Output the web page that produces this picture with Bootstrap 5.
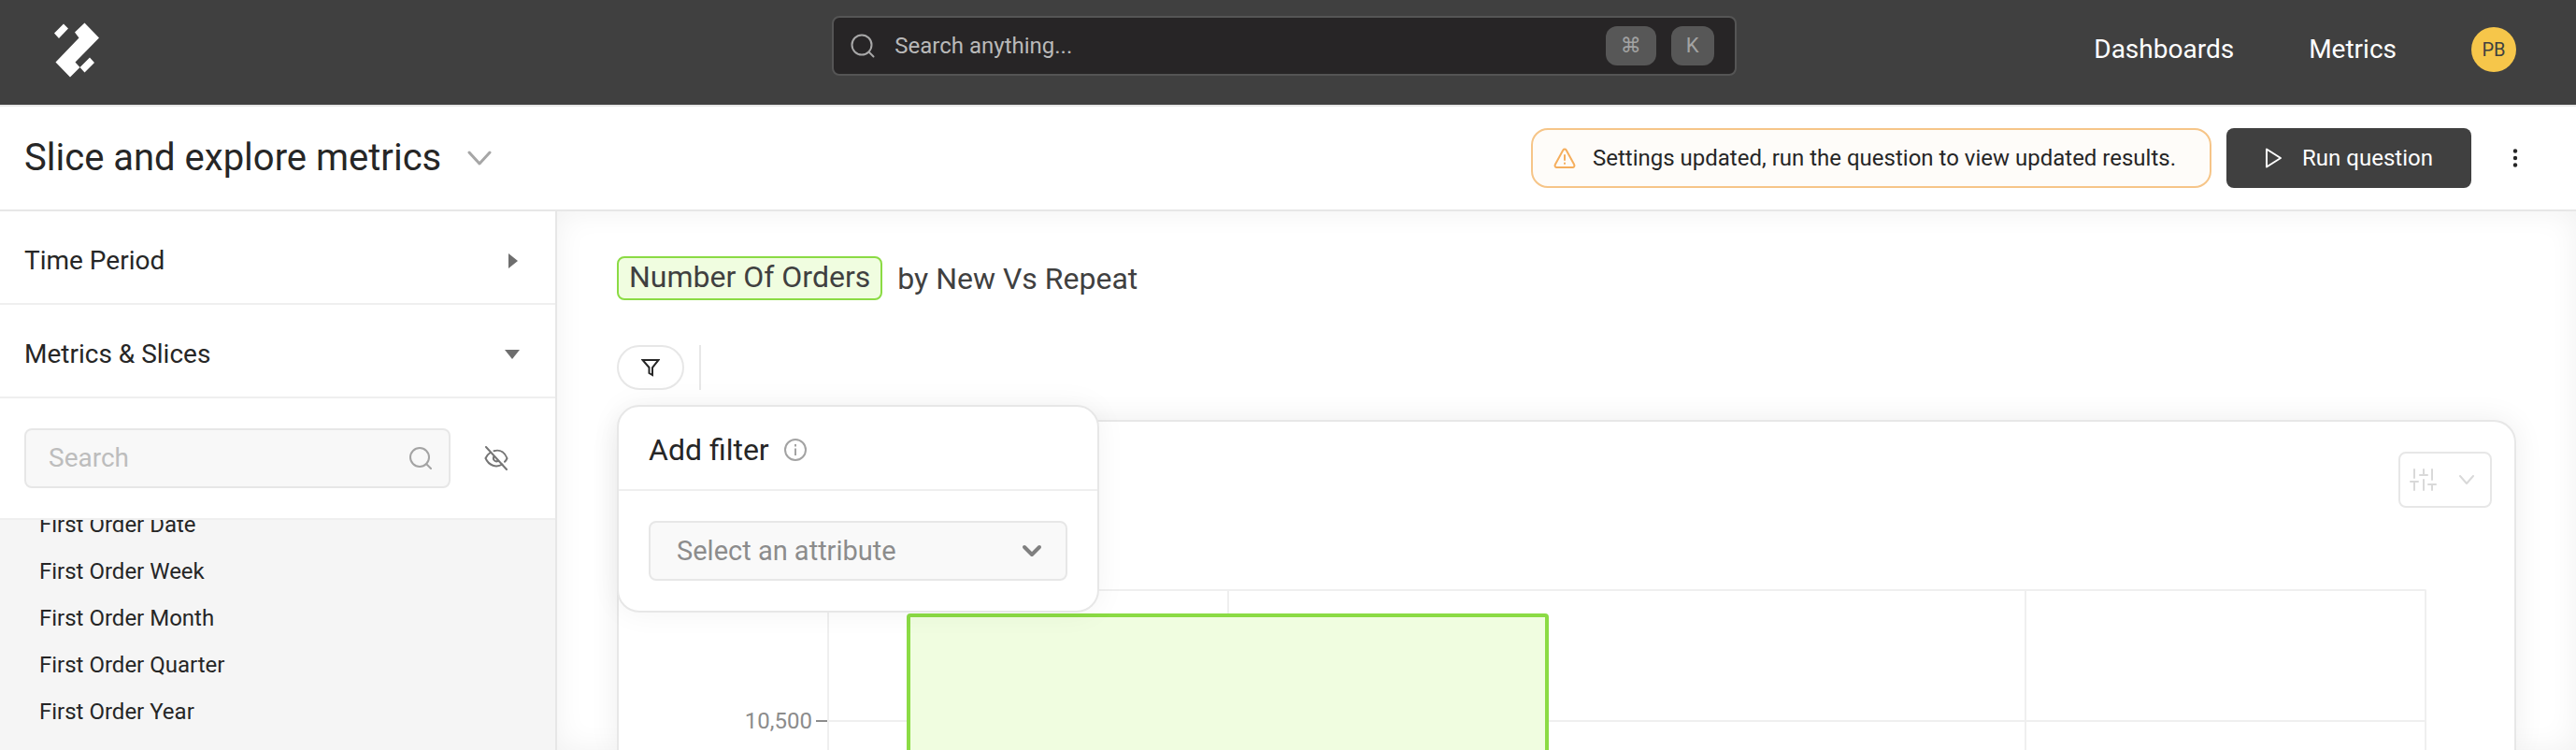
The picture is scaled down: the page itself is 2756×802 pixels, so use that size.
<!DOCTYPE html>
<html lang="en">
<head>
<meta charset="utf-8">
<meta name="viewport" content="width=device-width, initial-scale=1">
<title>Slice and explore metrics</title>
<link rel="stylesheet" href="https://cdn.jsdelivr.net/npm/bootstrap@5.3.0/dist/css/bootstrap.min.css">
<style>
:root{--line:#e7e7e7;--line-soft:#efefef;--ink:#262626;--charcoal:#404040;--green:#8bdb44;--green-bg:#f0fde0}
body{font-family:Roboto,"Liberation Sans",sans-serif;font-size:24px;line-height:32px;color:var(--ink);background:#fff}
svg{display:block;flex:none}
.fs-md{font-size:28px}
.fs-lg{font-size:32px;line-height:40px}
.topbar{background:var(--charcoal);border-bottom:2px solid var(--line);height:114px;padding:0 64px 0 56px;display:grid;grid-template-columns:1fr 36.7% 1fr;align-items:center}
.topbar a{color:#fff;text-decoration:none}
.brand{padding-bottom:4px}
.omni{background:#272526;border:2px solid #555;border-radius:8px;height:64px;padding:0 22px 0 18px;gap:21px;margin-bottom:14px}
.omni input{background:none;border:0;outline:0;color:#b9b9b9;min-width:0;padding:0}
.omni input::placeholder{color:#b9b9b9;opacity:1}
.omni kbd{font-family:Roboto,"DejaVu Sans",sans-serif;font-size:22px;background:#575757;color:#a3a3a3;border-radius:12px;padding:0;height:42px;line-height:42px;width:46px;text-align:center}
.omni kbd.wide{width:54px}
.toplinks{gap:80px;padding-bottom:6px}
.avatar{width:48px;height:48px;border-radius:50%;background:#f6c64a;color:#404040;font-size:20px;border:0;padding:0}
.titlebar{height:112px;border-bottom:2px solid var(--line);padding:0 62px 0 26px}
.titlebar h1{font-size:40px;line-height:48px;font-weight:400}
.switch{margin-left:28px}
.more{margin-left:44px}
.notice{border:2px solid #f6c588;border-radius:18px;background:#fefcf9;height:64px;padding:0 36px 0 22px;gap:18px}
.run{background:var(--charcoal);color:#fff;border:0;border-radius:8px;height:64px;width:262px;font-size:24px;gap:20px}
.run:hover{background:#2d2d2d;color:#fff}
.plain{background:none;border:0;padding:0;color:inherit}
.work{min-height:0}
.side{width:596px;border-right:2px solid var(--line)}
.side-head{height:100px;border:0;border-bottom:2px solid var(--line-soft);background:none;color:var(--ink);padding:8px 38px 0 26px;font-size:28px;text-align:left}
.side-find{height:130px;border-bottom:2px solid var(--line-soft);padding:0 50px 0 26px;gap:36px}
.find-box{background:#f8f8f8;border:2px solid var(--line);border-radius:8px;height:64px;padding:0 18px 0 24px}
.find-box input{background:none;border:0;outline:0;min-width:0;padding:0;font-size:28px}
.find-box input::placeholder{color:#bdbdbd;opacity:1}
.attrs{background:#f5f5f5;overflow:hidden;min-height:0}
.attrs a{display:block;height:50px;line-height:50px;padding-left:42px;color:var(--ink);text-decoration:none}
.attrs-end{height:40vh}
.stage{padding:48px 64px 0;box-shadow:inset 0 0 32px rgba(0,0,0,.06);min-width:0}
.stage h2{color:var(--charcoal);font-weight:400;font-size:32px;line-height:40px;gap:16px}
.metric{border:2px solid var(--green);background:var(--green-bg);border-radius:8px;padding:0 11px 3px}
.filters{margin-top:48px;height:48px;gap:16px}
.pill{width:72px;height:48px;border:2px solid var(--line);border-radius:24px;background:#fff;padding:0}
.rule{width:2px;background:var(--line)}
.pop{position:absolute;left:0;top:64px;width:516px;z-index:2;background:#fff;border:2px solid var(--line);border-radius:24px;box-shadow:0 0 32px rgba(0,0,0,.05)}
.pop-head{height:90px;padding:4px 32px 0;gap:16px;border-bottom:2px solid var(--line-soft)}
.pop-body{padding:32px}
.pick{appearance:none;width:100%;height:64px;border:2px solid var(--line);border-radius:8px;font-size:29px;line-height:36px;color:#8c8c8c;padding:0 64px 0 28px;background:#f9f9f9 url("data:image/svg+xml,%3Csvg xmlns='http://www.w3.org/2000/svg' width='24' height='24' fill='none' stroke='%23808080' stroke-width='4' stroke-linecap='round' stroke-linejoin='round'%3E%3Cpath d='M4 8l8 8 8-8'/%3E%3C/svg%3E") no-repeat right 24px center}
.panel{margin-top:32px;border:2px solid var(--line);border-bottom:0;border-radius:24px 24px 0 0;box-shadow:0 0 32px rgba(0,0,0,.07);background:#fff;min-height:0}
.panel-tools{padding:32px 24px 0;height:179px}
.tune{width:100px;height:60px;border:2px solid var(--line);border-radius:8px;background:#fff;gap:22px;padding:0 0 0 10px;color:#d9d9d9}
.axis{width:223px;padding-top:125px;color:#8c8c8c}
.axis span{display:flex;align-items:center;justify-content:flex-end;gap:4px;height:32px;margin-bottom:108px}
.axis span::after{content:"";width:12px;height:2px;background:#8c8c8c}
.plot{margin-right:94px;border:2px solid var(--line-soft);border-bottom:0;border-radius:2px 2px 0 0;background:
 linear-gradient(var(--line-soft),var(--line-soft)) 25% 0/2px 100% no-repeat,
 linear-gradient(var(--line-soft),var(--line-soft)) 75% 0/2px 100% no-repeat,
 repeating-linear-gradient(transparent 0 138px,var(--line-soft) 138px 140px)}
.slot{width:50%;overflow:hidden}
.column{width:80.5%;margin:24px auto 0;border:4px solid var(--green);border-radius:4px;background:var(--green-bg);height:1200px}
</style>
</head>
<body class="vh-100 overflow-hidden d-flex flex-column">
<header class="topbar flex-shrink-0">
  <a class="brand" href="#" aria-label="Home"><svg width="52" height="60" viewBox="0 0 52 60" fill="#fff"><path d="M2 11.500L12 1.500l5 5L7 17zM24 10.500L34.500.500 50 16.500 24.500 42.500 29.500 48 19 58.500 3.500 42.500 28.500 16.500zM29.500 48L40 37.500l5 5.500L34.500 53.500z"/></svg></a>
  <label class="omni d-flex align-items-center">
    <svg width="26" height="26" viewBox="0 0 26 26" fill="none" stroke="#a8a8a8" stroke-width="2" stroke-linecap="round"><circle cx="12" cy="12" r="10.500"/><path d="M19.500 19.500l5 5"/></svg>
    <input class="flex-fill" type="text" placeholder="Search anything..." aria-label="Search anything">
    <span class="d-flex align-items-center gap-3"><kbd class="wide">⌘</kbd><kbd>K</kbd></span>
  </label>
  <nav class="toplinks d-flex justify-content-end align-items-center fs-md"><a href="#">Dashboards</a><a href="#">Metrics</a><button class="avatar" type="button">PB</button></nav>
</header>
<div class="titlebar d-flex align-items-center flex-shrink-0">
  <h1 class="mb-0">Slice and explore metrics</h1>
  <button class="plain switch" type="button" aria-label="Switch question"><svg width="26" height="18" fill="none" stroke="#a6a6a6" stroke-width="3" stroke-linecap="round" stroke-linejoin="round"><path d="M2 3l11 12L24 3"/></svg></button>
  <div class="d-flex align-items-center gap-3 ms-auto">
    <div class="notice d-flex align-items-center" role="status"><svg width="24" height="24" viewBox="0 0 24 24" fill="none" stroke="#f5ae5d" stroke-width="2" stroke-linejoin="round" stroke-linecap="round"><path d="M10.300 3.500L1.800 19a2 2 0 0 0 1.700 3h17a2 2 0 0 0 1.700-3L13.700 3.500a2 2 0 0 0-3.400 0zM12 9v5M12 17.500v.500"/></svg>Settings updated, run the question to view updated results.</div>
    <button class="run d-flex align-items-center justify-content-center" type="button"><svg width="20" height="22" fill="none" stroke="#fff" stroke-width="2" stroke-linejoin="round"><path d="M2 1.500v19L17 11z"/></svg>Run question</button>
  </div>
  <button class="plain more" type="button" aria-label="More"><svg width="6" height="20" viewBox="-3 0 6 20" fill="#262626"><circle cx="0" cy="2.500" r="2.200"/><circle cx="0" cy="10" r="2.200"/><circle cx="0" cy="17.500" r="2.200"/></svg></button>
</div>
<div class="work d-flex flex-fill">
  <aside class="side d-flex flex-column flex-shrink-0">
    <button class="side-head d-flex align-items-center justify-content-between flex-shrink-0" type="button">Time Period<svg width="16" height="16" fill="#6e6e6e"><path d="M4 0l10 8-10 8z"/></svg></button>
    <button class="side-head d-flex align-items-center justify-content-between flex-shrink-0" type="button">Metrics &amp; Slices<svg width="16" height="10" fill="#6e6e6e"><path d="M0 0h16L8 10z"/></svg></button>
    <div class="side-find d-flex align-items-center flex-shrink-0">
      <label class="find-box d-flex align-items-center flex-fill"><input class="flex-fill" type="search" placeholder="Search" aria-label="Search slices"><svg width="24" height="24" fill="none" stroke="#a3a3a3" stroke-width="2" stroke-linecap="round"><circle cx="11" cy="11" r="10"/><path d="M18 18l5 5"/></svg></label>
      <button class="plain" type="button" aria-label="Toggle hidden"><svg width="26" height="26" viewBox="0 0 26 26" fill="none" stroke="#757575" stroke-width="2" stroke-linecap="round"><path d="M2 1l22 24M10.500 5.200C18 3 22.500 8 24.500 13c-.7 1.700-1.500 2.800-2.500 3.800M6.500 7C4 8.700 2.500 10.800 1.500 13c3.500 8 11.500 10.500 18 6.500M10.500 11c-2 3.500 1.500 6.500 4.500 4.800"/></svg></button>
    </div>
    <nav class="attrs flex-fill" id="attrs"><a href="#">First Order Date</a><a href="#">First Order Week</a><a href="#">First Order Month</a><a href="#">First Order Quarter</a><a href="#">First Order Year</a><div class="attrs-end"></div></nav>
  </aside>
  <main class="stage flex-fill d-flex flex-column">
    <h2 class="d-flex align-items-center mb-0"><span class="metric">Number Of Orders</span>by New Vs Repeat</h2>
    <div class="filters d-flex position-relative flex-shrink-0">
      <button class="pill d-flex align-items-center justify-content-center" type="button" aria-label="Add filter"><svg width="20" height="20" fill="none" stroke="#262626" stroke-width="2"><path d="M1.500 2h17L12 10v8l-3.500-2v-6z"/></svg></button>
      <div class="rule"></div>
      <section class="pop">
        <div class="pop-head d-flex align-items-center"><label class="fs-lg" for="attr">Add filter</label><svg width="24" height="24" fill="none" stroke="#a3a3a3" stroke-width="2"><circle cx="12" cy="12" r="11"/><path d="M12 10.500V18M12 6v2.500"/></svg></div>
        <div class="pop-body"><select class="pick d-block" id="attr"><option>Select an attribute</option></select></div>
      </section>
    </div>
    <section class="panel flex-fill d-flex flex-column">
      <div class="panel-tools d-flex justify-content-end flex-shrink-0"><button class="tune d-flex align-items-center" type="button" aria-label="Chart settings"><svg width="30" height="26" fill="none" stroke="currentColor" stroke-width="2" stroke-linecap="round"><path d="M5 2v9M5 15v9M1 15h8M15 2v6M11 8h8M15 13v11M24 2v11M24 18v6M20 18h8"/></svg><svg width="18" height="12" fill="none" stroke="currentColor" stroke-width="2" stroke-linecap="round" stroke-linejoin="round"><path d="M2 2l7 8 7-8"/></svg></button></div>
      <div class="d-flex flex-fill overflow-hidden">
        <div class="axis flex-shrink-0"><span>10,500</span></div>
        <div class="plot flex-fill d-flex"><div class="slot"><div class="column"></div></div><div class="slot"></div></div>
      </div>
    </section>
  </main>
</div>
<script src="https://cdn.jsdelivr.net/npm/bootstrap@5.3.0/dist/js/bootstrap.bundle.min.js"></script>
<script>document.getElementById("attrs").scrollTop = 20;</script>
</body>
</html>
